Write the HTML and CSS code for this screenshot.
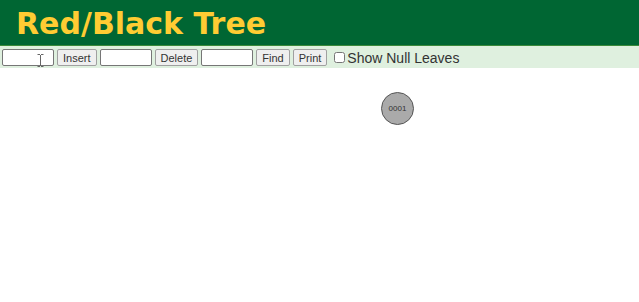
FILE: index.html
```html
<!DOCTYPE html>
<html lang="en">
<head>
  <meta charset="UTF-8" />
  <title>Red/Black Tree</title>
  <link rel="stylesheet" href="styles.css">
</head>
<body>

<header class="header">
  <h1>Red/Black Tree</h1>
</header>

<div class="controls">
  <span class="field-wrap">
    <input type="text" class="field">
    <svg class="ibeam" width="7" height="13" viewBox="0 0 7 13">
      <path d="M0.5 0.5h2.5M4 0.5h2.5M3.5 1v11M0.5 12.5h2.5M4 12.5h2.5" stroke="#666" stroke-width="1" fill="none"/>
    </svg>
  </span>
  <button class="btn">Insert</button>
  <input type="text" class="field">
  <button class="btn">Delete</button>
  <input type="text" class="field">
  <button class="btn">Find</button>
  <button class="btn">Print</button>
  <label class="toggle"><input type="checkbox" class="check">Show Null Leaves</label>
</div>

<div class="canvas">
  <div class="node" style="left: 381px; top: 24px;">0001</div>
</div>

</body>
</html>
```

FILE: styles.css
```css
* {
  box-sizing: border-box;
}

body {
  margin: 0;
  background: #fff;
  font-family: 'Liberation Sans', Arial, sans-serif;
}

.header {
  background: #006633;
  height: 46px;
  border-bottom: 1px solid #3a8a3a;
  padding-left: 16px;
  padding-top: 1px;
  display: flex;
  align-items: center;
}

.header h1 {
  margin: 0;
  font-family: 'DejaVu Sans', Verdana, sans-serif;
  font-weight: bold;
  font-size: 30px;
  color: #ffcc33;
}

.controls {
  background: #dff0df;
  height: 22px;
  display: flex;
  align-items: center;
  gap: 3px;
  padding-left: 2px;
  padding-top: 1px;
}

.field-wrap {
  position: relative;
  display: flex;
}

.ibeam {
  position: absolute;
  left: 35px;
  top: 5px;
}

.field {
  width: 52px;
  height: 17px;
  border: 1px solid #767676;
  border-radius: 2px;
  background: #fff;
  padding: 0;
}

.btn {
  height: 17px;
  padding: 0 5px;
  font-family: 'Liberation Sans', Arial, sans-serif;
  font-size: 11px;
  color: #333;
  background: #efefef;
  border: 1px solid #a0a0a0;
  border-radius: 2px;
}

.toggle {
  display: flex;
  align-items: center;
  font-size: 14px;
  color: #333;
}

.check {
  margin: 0 2px 0 4px;
  width: 11px;
  height: 11px;
}

.canvas {
  position: relative;
  height: 233px;
}

.node {
  position: absolute;
  width: 33px;
  height: 33px;
  border-radius: 50%;
  background: #aaa;
  border: 1px solid #555;
  display: flex;
  align-items: center;
  justify-content: center;
  font-size: 8px;
  color: #333;
}
```
